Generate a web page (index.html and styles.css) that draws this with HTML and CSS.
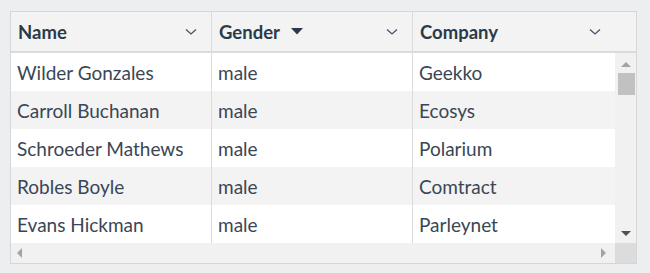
FILE: index.html
```html
<!DOCTYPE html>
<html lang="en">
<head>
  <meta charset="UTF-8">
  <meta name="viewport" content="width=device-width, initial-scale=1.0"/>
  <title>People Grid</title>
  <link rel="stylesheet" href="styles.css">
</head>
<body>
  <div class="grid">
    <div class="grid-head">
      <div class="col col-name">
        <span class="title">Name</span>
        <svg class="menu" width="12" height="8" viewBox="0 0 12 8"><path d="M1 1.5 L6 6 L11 1.5" fill="none" stroke="#44546a" stroke-width="1.3"/></svg>
      </div>
      <div class="col col-gender">
        <span class="title">Gender</span>
        <svg class="sort" width="12" height="7" viewBox="0 0 12 7"><path d="M0 0 H12 L6 6.5 Z" fill="#2b3a4a"/></svg>
        <svg class="menu" width="12" height="8" viewBox="0 0 12 8"><path d="M1 1.5 L6 6 L11 1.5" fill="none" stroke="#44546a" stroke-width="1.3"/></svg>
      </div>
      <div class="col col-company">
        <span class="title">Company</span>
        <svg class="menu" width="12" height="8" viewBox="0 0 12 8"><path d="M1 1.5 L6 6 L11 1.5" fill="none" stroke="#44546a" stroke-width="1.3"/></svg>
      </div>
    </div>

    <div class="grid-main">
      <div class="rows">
        <div class="row"><div class="cell col-name">Wilder Gonzales</div><div class="cell col-gender">male</div><div class="cell col-company">Geekko</div></div>
        <div class="row"><div class="cell col-name">Carroll Buchanan</div><div class="cell col-gender">male</div><div class="cell col-company">Ecosys</div></div>
        <div class="row"><div class="cell col-name">Schroeder Mathews</div><div class="cell col-gender">male</div><div class="cell col-company">Polarium</div></div>
        <div class="row"><div class="cell col-name">Robles Boyle</div><div class="cell col-gender">male</div><div class="cell col-company">Comtract</div></div>
        <div class="row"><div class="cell col-name">Evans Hickman</div><div class="cell col-gender">male</div><div class="cell col-company">Parleynet</div></div>
      </div>
      <div class="vscroll">
        <span class="arrow up"></span>
        <span class="thumb"></span>
        <span class="arrow down"></span>
      </div>
    </div>

    <div class="grid-foot">
      <div class="hscroll">
        <span class="arrow left"></span>
        <span class="arrow right"></span>
      </div>
      <div class="corner"></div>
    </div>
  </div>
</body>
</html>
```

FILE: styles.css
```css
* {
  box-sizing: border-box;
}

body {
  margin: 0;
  padding: 11px 0 0 10px;
  background-color: #eceeef;
  font-family: Lato, "Open Sans", sans-serif;
  color: #3a4655;
}

.grid {
  width: 627px;
  border: 1px solid #d4d6d7;
  background-color: #f3f3f3;
}

/* header */
.grid-head {
  display: flex;
  height: 41px;
  border-bottom: 2px solid #dbdbdb;
  padding-right: 21px;
}

.grid-head .col {
  display: flex;
  align-items: center;
  padding: 0 14px 0 7px;
  border-right: 1px solid #dbdbdb;
  font-size: 18.5px;
  font-weight: bold;
  color: #2b3a4a;
}

.grid-head .col-company {
  border-right: none;
}

.title {
  flex: none;
}

.sort {
  margin-left: 11px;
}

.menu {
  margin-left: auto;
}

.col-name {
  width: 201px;
  flex: none;
}

.col-gender {
  width: 201px;
  flex: none;
}

.col-company {
  flex: 1;
}

/* body rows */
.grid-main {
  display: flex;
  height: 190px;
}

.rows {
  flex: 1;
  overflow: hidden;
}

.row {
  display: flex;
  height: 38px;
  background-color: #ffffff;
}

.row:nth-child(even) {
  background-color: #f3f3f3;
}

.cell {
  display: flex;
  align-items: center;
  padding: 0 6px;
  font-size: 19px;
  border-right: 1px solid #dbdbdb;
}

.cell.col-company {
  border-right: none;
}

/* scrollbars */
.vscroll {
  width: 21px;
  display: flex;
  flex-direction: column;
  align-items: center;
  padding: 9px 0 0 1px;
  background-color: #f1f1f1;
}

.arrow {
  width: 0;
  height: 0;
  border: 5px solid transparent;
}

.arrow.up {
  border-bottom-color: #a3a3a3;
  border-top-width: 0;
}

.arrow.down {
  margin-top: auto;
  margin-bottom: 7px;
  border-top-color: #505050;
  border-bottom-width: 0;
}

.thumb {
  width: 17px;
  height: 22px;
  margin-top: 6px;
  background-color: #c1c1c1;
}

.grid-foot {
  display: flex;
  height: 20px;
}

.hscroll {
  flex: 1;
  display: flex;
  align-items: center;
  justify-content: space-between;
  padding: 0 9px 0 6px;
  background-color: #f1f1f1;
}

.arrow.left {
  border-right-color: #a3a3a3;
  border-left-width: 0;
}

.arrow.right {
  border-left-color: #a3a3a3;
  border-right-width: 0;
}

.corner {
  width: 21px;
  background-color: #dcdcdc;
}
```
